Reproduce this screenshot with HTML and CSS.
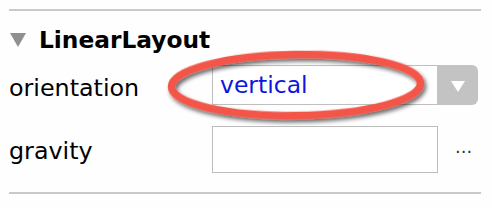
FILE: index.html
```html
<!DOCTYPE html>
<html>
<head>
<meta charset="utf-8">
<link rel="stylesheet" href="styles.css">
</head>
<body>
<div class="panel">
  <div class="rule"></div>
  <div class="header">
    <span class="disclosure"></span>
    <span class="title">LinearLayout</span>
  </div>
  <div class="row row-orientation">
    <div class="label">orientation</div>
    <div class="combo">
      <div class="combo-field">vertical</div>
      <div class="combo-button"><span class="combo-arrow"></span></div>
    </div>
  </div>
  <div class="row row-gravity">
    <div class="label">gravity</div>
    <div class="text-field"></div>
    <div class="more">...</div>
  </div>
  <div class="rule rule-bottom"></div>
  <svg class="highlight" width="280" height="90" viewBox="0 0 280 90">
    <defs>
      <filter id="sh" x="-10%" y="-30%" width="120%" height="160%">
        <feGaussianBlur in="SourceAlpha" stdDeviation="2"/>
        <feOffset dx="2" dy="3" result="b"/>
        <feComponentTransfer><feFuncA type="linear" slope="0.6"/></feComponentTransfer>
        <feMerge><feMergeNode/><feMergeNode in="SourceGraphic"/></feMerge>
      </filter>
    </defs>
    <ellipse cx="140" cy="40" rx="124.5" ry="30.5" transform="rotate(-0.8 140 40)" fill="none" stroke="#f3574a" stroke-width="7.5" filter="url(#sh)"/>
  </svg>
</div>
</body>
</html>
```
FILE: styles.css
```css
html, body {
  margin: 0;
  padding: 0;
  background: #fefefe;
}
body {
  width: 492px;
  height: 208px;
  overflow: hidden;
  font-family: "DejaVu Sans", sans-serif;
  color: #000;
}
.panel {
  position: relative;
  padding: 9px 0 0 9px;
  width: 472px;
}
.rule {
  height: 2px;
  background: #c9c9c9;
}
.header {
  display: flex;
  align-items: center;
  margin-top: 15px;
  height: 28px;
}
.disclosure {
  width: 0;
  height: 0;
  margin-left: 1px;
  margin-right: 13px;
  border-left: 8px solid transparent;
  border-right: 8px solid transparent;
  border-top: 14px solid #909090;
}
.title {
  font-weight: bold;
  font-size: 23.3px;
  line-height: 28px;
  color: #000;
}
.row {
  display: flex;
  align-items: flex-start;
}
.label {
  width: 203px;
  flex: none;
  font-size: 23.8px;
  line-height: 28px;
}
.row-orientation {
  margin-top: 11px;
  height: 40px;
}
.row-orientation .label {
  margin-top: 9px;
}
.combo {
  display: flex;
  height: 40px;
}
.combo-field {
  height: 38px;
  border: 1px solid #bfbfbf;
  border-right: none;
  background: #fff;
  color: #0b17dc;
  font-size: 23.5px;
  line-height: 38px;
  padding-left: 7px;
  box-sizing: content-box;
  width: 217px;
}
.combo-button {
  width: 41px;
  height: 40px;
  background: #c3c3c3;
  border-radius: 0 6px 6px 0;
  display: flex;
  align-items: center;
  justify-content: center;
}
.combo-arrow {
  width: 0;
  height: 0;
  border-left: 7px solid transparent;
  border-right: 7px solid transparent;
  border-top: 11px solid #fff;
  margin-top: 2px;
}
.row-gravity {
  margin-top: 21px;
  height: 47px;
}
.row-gravity .label {
  margin-top: 11px;
}
.text-field {
  width: 224px;
  height: 45px;
  border: 1px solid #bdbdbd;
  background: #fff;
}
.more {
  margin-left: 17px;
  margin-top: 7px;
  font-size: 18px;
  line-height: 28px;
  color: #333;
}
.rule-bottom {
  margin-top: 19px;
}
.highlight {
  position: absolute;
  left: 156px;
  top: 45px;
  overflow: visible;
}
```
